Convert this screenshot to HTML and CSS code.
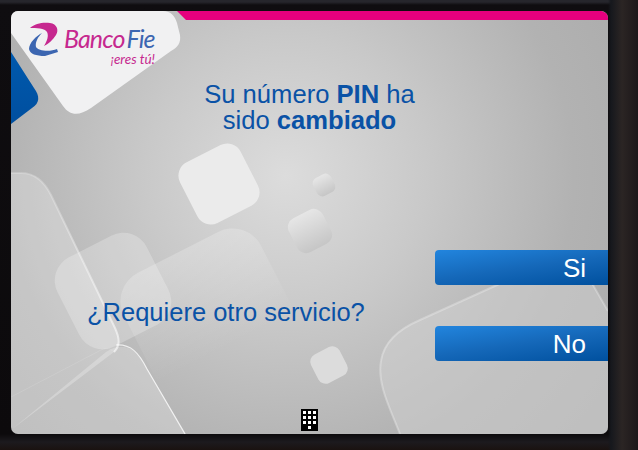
FILE: index.html
```html
<!DOCTYPE html>
<html lang="es">
<head>
<meta charset="utf-8">
<title>Banco Fie</title>
<link rel="stylesheet" href="styles.css">
</head>
<body>
<div class="bezel">
  <main class="screen">
    <svg class="art" viewBox="0 0 597 423" aria-hidden="true">
      <defs>
        <radialGradient id="bg" gradientUnits="userSpaceOnUse" cx="275" cy="165" r="400">
          <stop offset="0" stop-color="#dcdcdc"/>
          <stop offset=".35" stop-color="#c9c9c9"/>
          <stop offset=".72" stop-color="#b2b2b2"/>
          <stop offset="1" stop-color="#ababab"/>
        </radialGradient>
        <linearGradient id="fade" x1="0" y1="0" x2="0" y2="1">
          <stop offset="0" stop-color="#fff" stop-opacity=".22"/>
          <stop offset=".7" stop-color="#fff" stop-opacity="0"/>
        </linearGradient>
        <linearGradient id="chip" x1="0" y1="0" x2="0" y2="1">
          <stop offset="0" stop-color="#e6e6e6"/>
          <stop offset="1" stop-color="#c6c6c6"/>
        </linearGradient>
        <linearGradient id="blue" x1="0" y1="0" x2="0" y2="1">
          <stop offset="0" stop-color="#0059ad"/>
          <stop offset="1" stop-color="#004f9f"/>
        </linearGradient>
        <linearGradient id="rim" gradientUnits="userSpaceOnUse" x1="0" y1="162" x2="0" y2="341">
          <stop offset="0" stop-color="#fff" stop-opacity=".2"/>
          <stop offset="1" stop-color="#fff" stop-opacity=".6"/>
        </linearGradient>
      </defs>
      <rect width="597" height="423" fill="url(#bg)"/>
      <path d="M389 423C378 395 366 372 370 350C373 330 388 318 409 309L486 274L530 252C555 244 572 258 582 274L597 300V423Z" fill="#cfcfcf" fill-opacity=".55"/>
      <path d="M389 423C378 395 366 372 370 350C373 330 388 318 409 309L486 274L530 252C555 244 572 258 582 274L597 300" fill="none" stroke="#fff" stroke-opacity=".28" stroke-width="2"/>
      <g transform="rotate(-27 208 173)"><rect x="174" y="139" width="68" height="68" rx="15" fill="#ebebeb"/></g>
      <g transform="rotate(-27 313 174)"><rect x="303" y="164" width="20" height="20" rx="6" fill="url(#chip)"/></g>
      <g transform="rotate(-27 299 220)"><rect x="280" y="201" width="38" height="38" rx="10" fill="url(#chip)"/></g>
      <g transform="rotate(-27 318 354)"><rect x="302" y="338" width="32" height="32" rx="8" fill="#dcdcdc"/></g>
      <g transform="rotate(-27 202 310)"><rect x="125" y="233" width="154" height="154" rx="32" fill="url(#fade)"/></g>
      <g transform="rotate(-27 102 280)"><rect x="52" y="230" width="100" height="100" rx="26" fill="#fff" fill-opacity=".24"/></g>
      <path d="M0 162H10C24 162 33 170 40 184L104 317C109 328 109 335 103 341L0 419Z" fill="#fff" fill-opacity=".26"/>
      <path d="M0 162H10C24 162 33 170 40 184L104 317C109 328 109 335 103 341" fill="none" stroke="url(#rim)" stroke-width="2"/>
      <path d="M0 386L90 339C96 336 100 338 103 341" fill="none" stroke="#fff" stroke-opacity=".12" stroke-width="1"/>
      <path d="M0 419L95 341C110 331 124 336 133 352L175 423H0Z" fill="#fff" fill-opacity=".24"/>
      <path d="M105 334C120 333 128 342 136 358L174 423" fill="none" stroke="#fff" stroke-opacity=".75" stroke-width="1.2"/>
      <path d="M0 41L23 77C29 85 29 92 21 97L0 113Z" fill="url(#blue)"/>
      <path d="M166 0L175 9H597V3L591 0Z" fill="#e6007e"/>
      <path d="M0 0H152C160 0 164 5 166 12L169 24C170 32 167 36 160 40L80 97C68 105 59 105 52 95L0 22Z" fill="#f1f1f2"/>
    </svg>

    <div class="brand">
      <svg class="brand-mark" viewBox="0 0 32 36" aria-hidden="true">
        <path d="M1 6C6 1 15 0 21 1C28 2 30 8 27 13C24 18 19 22 15 24C18 19 20 14 18 10C16 6 7 6 1 6Z" fill="#c6288f"/>
        <path d="M13 11C7 14 0 21 0 27C1 32 7 34 16 34L29 30L28 27C21 30 9 29 7 25C6 20 9 15 13 11Z" fill="#3c66b1"/>
      </svg>
      <div class="brand-text">
        <div class="brand-name"><span class="brand-banco">Banco</span><span class="brand-fie">Fie</span></div>
        <div class="brand-tag">¡eres tú!</div>
      </div>
    </div>

    <h1 class="title">Su número <b>PIN</b> ha<br>sido <b>cambiado</b></h1>

    <section class="prompt">
      <p class="question">¿Requiere otro servicio?</p>
      <div class="options">
        <button class="option">Si</button>
        <button class="option">No</button>
      </div>
    </section>

    <div class="keypad-row">
      <div class="keypad" aria-label="Teclado">
        <i></i><i></i><i></i><i></i><i></i><i></i><i></i><i></i><i></i><i class="zero"></i>
      </div>
    </div>
  </main>
</div>
</body>
</html>
```

FILE: styles.css
```css
* { box-sizing: border-box; }
html, body { margin: 0; padding: 0; }
body { width: 638px; height: 450px; overflow: hidden; background: #14131a; }

.bezel {
  width: 638px;
  height: 450px;
  padding: 11px 30px 16px 11px;
  background:
    linear-gradient(90deg, transparent 0 608px, #16181d 611px, #2b2524 622px, #1c1719 638px),
    linear-gradient(180deg, #26262c 0 2px, #0f0d10 5px, #0c0a0c 434px, #1c1a1e 442px, #1a1210 450px);
}

.screen {
  position: relative;
  width: 597px;
  height: 423px;
  border-radius: 7px;
  overflow: hidden;
  display: flex;
  flex-direction: column;
  font-family: "Liberation Sans", Arial, sans-serif;
  color: #0a52a6;
}

.art { position: absolute; inset: 0; width: 597px; height: 423px; display: block; }

.brand { position: absolute; left: 18px; top: 11px; display: flex; align-items: flex-start; gap: 3px; }
.brand-mark { width: 32px; height: 36px; flex: none; }
.brand-text { font-family: Lato, sans-serif; font-style: italic; margin-top: 5px; width: 91px; }
.brand-name { font-size: 25px; line-height: 22px; font-weight: 400; letter-spacing: -.9px; white-space: nowrap; }
.brand-banco { color: #c6288f; }
.brand-fie { color: #3c66b1; margin-left: 2px; }
.brand-tag { color: #c6288f; font-size: 13.5px; line-height: 14px; margin-top: 3px; text-align: right; }

.title {
  position: relative;
  margin: 70px 0 0;
  font-size: 25.6px;
  line-height: 26px;
  font-weight: 400;
  text-align: center;
}
.title b { font-weight: 700; }

.prompt {
  position: relative;
  margin-top: 117px;
  display: flex;
  justify-content: space-between;
  align-items: flex-start;
}
.question { margin: 47px 0 0 76px; font-size: 25.5px; line-height: 30px; }
.options { display: flex; flex-direction: column; gap: 41px; }
.option {
  width: 173px;
  height: 35px;
  padding: 0 22px 0 0;
  border: 0;
  border-radius: 4px 0 0 4px;
  background: linear-gradient(172deg, #2285de 0%, #1568b9 50%, #00509e 100%);
  color: #fff;
  font: 26px/36px "Liberation Sans", Arial, sans-serif;
  text-align: right;
}

.keypad-row { position: relative; margin-top: auto; display: flex; justify-content: center; padding: 0 0 3px; }
.keypad {
  width: 17px;
  height: 22px;
  padding: 2px;
  background: #000;
  display: grid;
  grid-template-columns: repeat(3, 3px);
  grid-auto-rows: 3px;
  gap: 2px;
}
.keypad i { background: #fff; }
.keypad .zero { grid-column: 2; }
```
